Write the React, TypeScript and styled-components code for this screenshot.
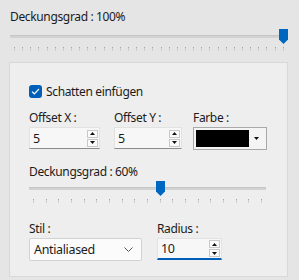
import React from 'react';
import styled, { createGlobalStyle } from 'styled-components';

const GlobalStyle = createGlobalStyle`
  html, body {
    margin: 0;
    padding: 0;
    background: #e5e5e5;
  }
  body {
    font-family: "Noto Sans", "Open Sans", sans-serif;
    font-size: 12px;
    letter-spacing: -0.35px;
    color: #1b1b1b;
  }
`;

const Page = styled.div`
  width: 299px;
  height: 280px;
  box-sizing: border-box;
  padding: 9px 11px 0 10px;
  display: flex;
  flex-direction: column;
`;

const Label = styled.div<{ $clip?: boolean }>`
  height: 16px;
  line-height: 16px;
  white-space: nowrap;
  overflow: ${(p) => (p.$clip ? 'hidden' : 'visible')};
`;

const SliderBox = styled.div<{ $width: number }>`
  position: relative;
  width: ${(p) => p.$width}px;
  height: 23px;
  flex-shrink: 0;
`;

const Track = styled.div`
  margin-top: 6px;
  height: 3px;
  background: #d2d2d2;
  border-top: 1px solid #c6c6c6;
  box-sizing: border-box;
`;

const Ticks = styled.div`
  display: flex;
  justify-content: space-between;
  padding: 0 4px;
  margin-top: 9px;
`;

const Tick = styled.span`
  width: 1px;
  height: 4px;
  background: linear-gradient(#a4a4a4 0 1px, #cdcdcd 1px);
`;

const Thumb = styled.svg`
  position: absolute;
  top: 0;
`;

const Panel = styled.div`
  margin: 10px 0 0 -1px;
  width: 279px;
  height: 215px;
  box-sizing: border-box;
  background: #eeeeee;
  border: 1px solid #d8d8d8;
  padding: 22px 0 0 19px;
  display: flex;
  flex-direction: column;
`;

const CheckRow = styled.label`
  display: flex;
  align-items: center;
  gap: 4px;
  height: 13px;
  font-size: 12px;
`;

const CheckBox = styled.span`
  width: 13px;
  height: 13px;
  border-radius: 3px;
  background: #005fb8;
  display: flex;
  align-items: center;
  justify-content: center;
`;

const FieldRow = styled.div<{ $top: number }>`
  display: flex;
  margin-top: ${(p) => p.$top}px;
`;

const Field = styled.div<{ $width: number; $gap?: number }>`
  width: ${(p) => p.$width}px;
  margin-right: ${(p) => p.$gap ?? 0}px;
  display: flex;
  flex-direction: column;
  gap: 1px;
`;

const SpinBox = styled.div<{ $focused?: boolean }>`
  height: 22px;
  box-sizing: border-box;
  display: flex;
  align-items: center;
  background: #f7f7f7;
  border: 1px solid #e2e2e2;
  border-bottom: ${(p) => (p.$focused ? '2px solid #005fb8' : '1px solid #8c8c8c')};
  padding-left: 3px;
`;

const SpinValue = styled.span`
  flex: 1;
  font-size: 12.5px;
`;

const SpinButtons = styled.div`
  display: flex;
  flex-direction: column;
  gap: 1px;
  margin-right: 1px;
`;

const SpinButton = styled.span`
  width: 11px;
  height: 8px;
  box-sizing: border-box;
  background: #fbfbfb;
  border: 1px solid #c8c8c8;
  display: flex;
  align-items: center;
  justify-content: center;
`;

const ColorPicker = styled.div`
  height: 23px;
  box-sizing: border-box;
  border: 1px solid #a9a9a9;
  background: #f4f4f4;
  padding: 2px;
  display: flex;
  align-items: stretch;
`;

const Swatch = styled.div`
  flex: 1;
  background: #000;
`;

const DropArrow = styled.div`
  width: 15px;
  display: flex;
  align-items: center;
  justify-content: center;
`;

const Select = styled.div`
  height: 23px;
  box-sizing: border-box;
  border: 1px solid #d2d2d2;
  border-radius: 2px;
  background: #fbfbfb;
  display: flex;
  align-items: center;
  justify-content: space-between;
  padding: 0 8px 0 4px;
  font-size: 12.5px;
`;

const Slider: React.FC<{ width: number; ticks: number; value: number }> = ({ width, ticks, value }) => {
  const left = Math.round(value * (width - 9));
  return (
    <SliderBox $width={width}>
      <Track />
      <Ticks>
        {Array.from({ length: ticks }).map((_, i) => (
          <Tick key={i} />
        ))}
      </Ticks>
      <Thumb width={9} height={15} viewBox="0 0 9 15" style={{ left }}>
        <path d="M0 0H9V10.5L4.5 15L0 10.5Z" fill="#0067c0" />
      </Thumb>
    </SliderBox>
  );
};

const Arrow: React.FC<{ up?: boolean }> = ({ up }) => (
  <svg width={5} height={3} viewBox="0 0 5 3">
    <path d={up ? 'M0 3H5L2.5 0Z' : 'M0 0H5L2.5 3Z'} fill="#111" />
  </svg>
);

const Spin: React.FC<{ value: string; focused?: boolean }> = ({ value, focused }) => (
  <SpinBox $focused={focused}>
    <SpinValue>{value}</SpinValue>
    <SpinButtons>
      <SpinButton>
        <Arrow up />
      </SpinButton>
      <SpinButton>
        <Arrow />
      </SpinButton>
    </SpinButtons>
  </SpinBox>
);

export default function App() {
  return (
    <>
      <GlobalStyle />
      <Page>
        <Label>Deckungsgrad : 100%</Label>
        <FieldRow $top={4}>
          <Slider width={278} ticks={34} value={1} />
        </FieldRow>
        <Panel>
          <CheckRow>
            <CheckBox>
              <svg width={9} height={7} viewBox="0 0 9 7">
                <path d="M1 3.6L3.3 5.8L8 1" stroke="#fff" strokeWidth={1.2} fill="none" />
              </svg>
            </CheckBox>
            Schatten einfügen
          </CheckRow>
          <FieldRow $top={12}>
            <Field $width={71} $gap={14}>
              <Label>Offset X :</Label>
              <Spin value="5" />
            </Field>
            <Field $width={68} $gap={11}>
              <Label>Offset Y :</Label>
              <Spin value="5" />
            </Field>
            <Field $width={74}>
              <Label>Farbe :</Label>
              <ColorPicker>
                <Swatch />
                <DropArrow>
                  <Arrow />
                </DropArrow>
              </ColorPicker>
            </Field>
          </FieldRow>
          <FieldRow $top={14}>
            <Field $width={237}>
              <Label $clip>Deckungsgrad : 60%</Label>
              <Slider width={237} ticks={19} value={10 / 18} />
            </Field>
          </FieldRow>
          <FieldRow $top={17}>
            <Field $width={113} $gap={15}>
              <Label>Stil :</Label>
              <Select>
                Antialiased
                <svg width={9} height={5} viewBox="0 0 9 5">
                  <path d="M0.5 0.5L4.5 4.5L8.5 0.5" stroke="#555" strokeWidth={1} fill="none" />
                </svg>
              </Select>
            </Field>
            <Field $width={65}>
              <Label>Radius :</Label>
              <Spin value="10" focused />
            </Field>
          </FieldRow>
        </Panel>
      </Page>
    </>
  );
}
